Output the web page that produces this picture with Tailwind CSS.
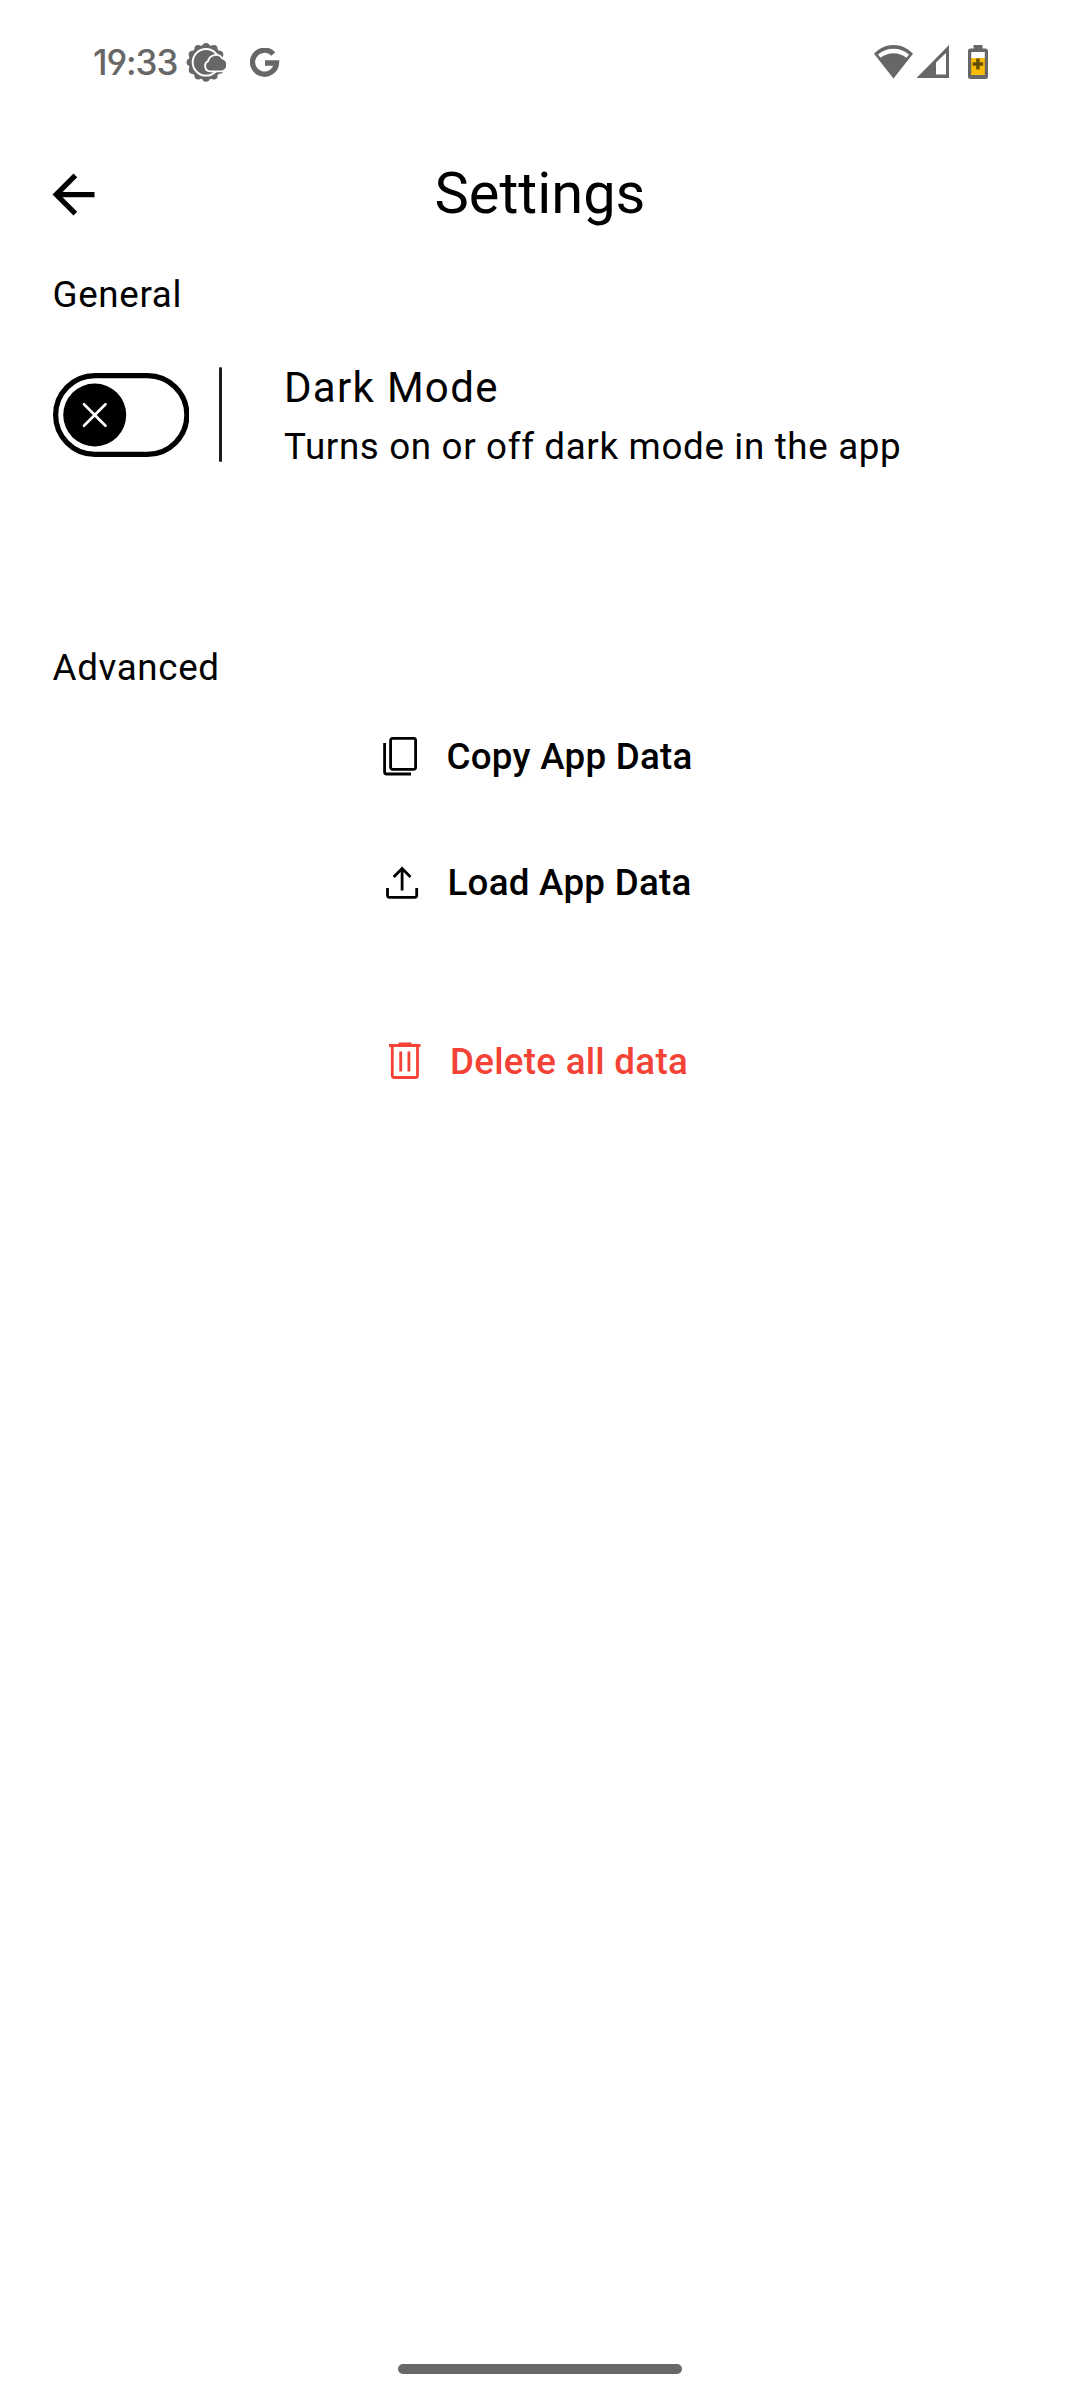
<!DOCTYPE html>
<html lang="en">
<head>
<meta charset="utf-8">
<title>Settings</title>
<script src="https://cdn.jsdelivr.net/npm/@tailwindcss/browser@4"></script>
</head>
<body class="bg-white text-black font-[Roboto,sans-serif]">
<div class="flex h-[2400px] w-[1080px] flex-col overflow-hidden">
  <header class="flex h-[126px] items-start pt-[38px] pl-[93px] pr-[91px] text-[#676767]">
    <span class="w-[93px] font-['Inter',sans-serif] text-[35px] font-medium leading-[48px] tracking-[-1.1px] whitespace-nowrap [font-feature-settings:'cv04']">19:33</span>
    <svg class="mt-[4px] size-[40px] shrink-0" viewBox="0 0 40 40">
      <g fill="currentColor" transform="translate(20 20.300)">
        <circle r="17.300"/>
        <circle cy="-15.600" r="3.800"/><circle cy="15.600" r="3.800"/><circle cx="-15.600" r="3.800"/>
        <circle cx="7.800" cy="-13.500" r="3.800"/><circle cx="13.500" cy="-7.800" r="3.800"/>
        <circle cx="-7.800" cy="-13.500" r="3.800"/><circle cx="-13.500" cy="-7.800" r="3.800"/>
        <circle cx="7.800" cy="13.500" r="3.800"/><circle cx="13.500" cy="7.800" r="3.800"/>
        <circle cx="-7.800" cy="13.500" r="3.800"/><circle cx="-13.500" cy="7.800" r="3.800"/>
        <circle r="13.300" fill="none" stroke="white" stroke-width="2"/>
      </g>
      <path d="M24.500 28.500a4.500 4.500 0 0 1-1.600-8.700A7 7 0 0 1 35.800 17.200 5.700 5.700 0 0 1 34.500 28.500Z" fill="currentColor" stroke="white" stroke-width="3.600"/>
      <path d="M24.500 28.500a4.500 4.500 0 0 1-1.600-8.700A7 7 0 0 1 35.800 17.200 5.700 5.700 0 0 1 34.500 28.500Z" fill="currentColor"/>
    </svg>
    <svg class="ml-[24px] mt-[10px] size-[30px] shrink-0" viewBox="0 0 30 30">
      <path d="M23.300 6A12 12 0 1 0 26.500 15H15" fill="none" stroke="currentColor" stroke-width="5.300"/>
    </svg>
    <div class="ml-auto flex pt-[7px]">
      <svg class="h-[34px] w-[40px]" viewBox="0 0 40 34">
        <path d="M19.500 33.500 0 8.800C5.500 3 12 0 19.500 0S33.500 3 39 8.800Z" fill="currentColor"/>
        <path d="M4 9.500C8.500 5.500 13.500 3.700 19.500 3.700s11 1.800 15.500 5.800l-2.500 3.300C28.500 9.800 24.500 8.300 19.500 8.300S10.500 9.800 6.500 12.800Z" fill="white"/>
      </svg>
      <svg class="ml-[3px] h-[34px] w-[33px]" viewBox="0 0 33 34">
        <path fill="currentColor" fill-rule="evenodd" d="M32 0v33H-.5ZM29 8 19 17.500V29.500h10Z"/>
      </svg>
      <svg class="ml-[18px] h-[34px] w-[21px]" viewBox="0 0 21 34">
        <path fill="currentColor" d="M5.500 0h9v3.500h3a2.500 2.500 0 0 1 2.500 2.500v25.500A2.500 2.500 0 0 1 17.500 34H2.500A2.500 2.500 0 0 1 0 31.500V6A2.500 2.500 0 0 1 2.500 3.500h3Z"/>
        <path fill="white" d="M3.200 7h13.600v6H3.200Z"/>
        <path fill="#fbbc04" d="M3.200 13h13.600v17H3.200Z"/>
        <path fill="#674f00" d="M8.200 13.500h3.500v3.700h3.400v3.500h-3.400v3.700H8.200v-3.700H4.700v-3.500h3.500Z"/>
      </svg>
    </div>
  </header>

  <div class="grid h-[136px] grid-cols-[1fr_auto_1fr] items-center px-[42px]">
    <svg class="size-[63px]" viewBox="0 0 24 24"><path d="M20 11H7.830l5.590-5.590L12 4l-8 8 8 8 1.410-1.410L7.830 13H20z"/></svg>
    <h1 class="pb-[2px] text-[57.750px] leading-[72px]">Settings</h1>
  </div>

  <main class="flex flex-col px-[52.500px]">
    <h2 class="mt-[7px] text-[36.750px] leading-[52px] tracking-[0.656px]">General</h2>

    <section class="mt-[46px] flex h-[96px] items-center">
      <svg class="h-[84px] w-[136.500px]" viewBox="0 0 52 32" fill="none">
        <rect x="1" y="1" width="50" height="30" rx="15" stroke="black" stroke-width="2"/>
        <circle cx="15.900" cy="16" r="12" fill="black"/>
        <path d="M11.800 11.900l8.200 8.200M20 11.900l-8.200 8.200" stroke="white" stroke-linecap="round"/>
      </svg>
      <div class="-mt-[2px] ml-[30px] h-[95px] w-[3px] rounded-full bg-[#1c1c1c]"></div>
      <div class="ml-[62px] flex flex-col pt-[4px] whitespace-nowrap">
        <span class="text-[42px] leading-[59px] tracking-[1.310px]">Dark Mode</span>
        <span class="text-[36.750px] leading-[60px] tracking-[0.656px]">Turns on or off dark mode in the app</span>
      </div>
    </section>

    <h2 class="mt-[179px] text-[36.750px] leading-[52px] tracking-[0.656px]">Advanced</h2>

    <div class="flex flex-col items-center text-[36.750px] font-medium leading-[52px] tracking-[0.260px]">
      <button class="mt-[37px] mr-[5px] flex items-center">
        <svg class="mr-[28px] h-[42px] w-[36px]" viewBox="0 0 36 42" fill="none" stroke="currentColor" stroke-width="2.800"><rect x="8.600" y="2.300" width="25" height="31" rx="2"/><path d="M2.600 7V36a2 2 0 0 0 2 2H29"/></svg>
        <span>Copy App Data</span>
      </button>
      <button class="mt-[74px] mr-[3px] flex items-center">
        <svg class="mr-[28px] h-[42px] w-[34px]" viewBox="0 0 34 42" fill="none" stroke="currentColor" stroke-width="2.800"><path d="M2.500 26V33.300a2 2 0 0 0 2 2H29.700a2 2 0 0 0 2-2V26M17.100 28.500V6.500M8.700 15 17.100 6.600l8.400 8.400"/></svg>
        <span>Load App Data</span>
      </button>
      <button class="mt-[127px] mr-[4px] flex items-center text-[#f44336]">
        <svg class="mr-[28px] h-[42px] w-[34px]" viewBox="0 0 34 42" fill="none" stroke="currentColor" stroke-width="2.800"><path d="M1 4.500H32.500M10.500 3h13M4.300 4.500V34.500a2 2 0 0 0 2 2H27.500a2 2 0 0 0 2-2V4.500M12.700 10.500V30.500M20.900 10.500V30.500"/></svg>
        <span>Delete all data</span>
      </button>
    </div>
  </main>

  <footer class="mt-auto flex justify-center pb-[26px]">
    <div class="h-[10px] w-[284px] rounded-full bg-[#676767]"></div>
  </footer>
</div>
</body>
</html>
